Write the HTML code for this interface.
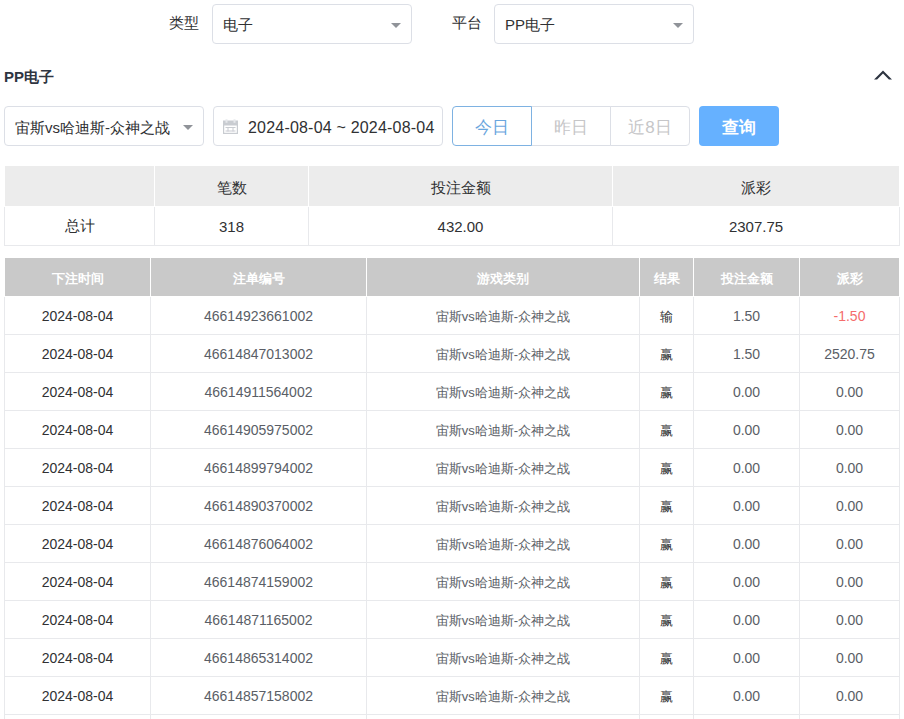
<!DOCTYPE html>
<html><head><meta charset="utf-8">
<style>
*{box-sizing:border-box;margin:0;padding:0}
html,body{width:904px;height:719px;overflow:hidden;background:#fff;font-family:"Liberation Sans",sans-serif;font-size:14px;color:#606266}
.abs{position:absolute}
.lbl{position:absolute;color:#303133;font-size:15px;line-height:20px;white-space:nowrap;margin-top:1px}
.sel{position:absolute;border:1px solid #dcdfe6;border-radius:4px;background:#fff;height:40px}
.sel .t{position:absolute;left:10px;top:10px;line-height:20px;color:#303133;font-size:15px;white-space:nowrap}
.sel .arr{position:absolute;right:10px;top:18px;width:0;height:0;border-left:5px solid transparent;border-right:5px solid transparent;border-top:5px solid #909399}
.title{position:absolute;left:4px;top:67px;font-weight:bold;color:#2f3541;font-size:15px;line-height:20px}
.rb{position:absolute;top:106px;height:40px;border:1px solid #dcdfe6;text-align:center;line-height:38px;padding-top:2px;color:#c6c6c8;font-size:17px;background:#fff}
.btn{position:absolute;left:699px;top:106px;width:80px;height:40px;border-radius:4px;background:#66b1ff;color:#fff;text-align:center;line-height:40px;padding-top:2px;font-size:17px;font-weight:bold}
table{border-collapse:collapse;position:absolute;table-layout:fixed}
td,th{text-align:center;font-weight:normal;padding:0}
#t1{left:4px;top:166px;width:895px}
#t1 th{padding-top:6px;background:#ececec;height:40px;color:#303133;font-size:15px;border:1px solid #fff;border-top:none}
#t1 td{padding-top:2px;height:39px;color:#303133;font-size:15px;border:1px solid #e8e9ec}
#t2{left:4px;top:258px;width:895px}
#t2 th{padding-top:4px;background:#c9c9c9;color:#fff;height:38px;font-weight:bold;font-size:13px;border:1px solid #fff;border-top:none}
#t2 td{padding-top:2px;height:38px;font-size:14px;color:#303133;border:1px solid #e8e9ec}
#t2 td.g{color:#5a5e66}
#t2 td.c{font-size:13px;padding-top:4px}
.red{color:#f56c6c !important}
</style></head><body>
<div class="lbl" style="left:169px;top:12px">类型</div>
<div class="sel" style="left:212px;top:4px;width:200px"><span class="t">电子</span><i class="arr"></i></div>
<div class="lbl" style="left:452px;top:12px">平台</div>
<div class="sel" style="left:494px;top:4px;width:200px"><span class="t">PP电子</span><i class="arr"></i></div>

<div class="title">PP电子</div>
<svg class="abs" style="left:870px;top:66px" width="26" height="18" viewBox="0 0 26 18"><path d="M4 13.6 L13 4.4 L22 13.6 L18.9 13.6 L13 7.6 L7.1 13.6 Z" fill="#2d3440"/></svg>

<div class="sel" style="left:4px;top:106px;width:200px"><span class="t" style="top:11px">宙斯vs哈迪斯-众神之战</span><i class="arr"></i></div>
<div class="sel" style="left:213px;top:106px;width:230px">
<svg class="abs" style="left:9px;top:12px" width="16" height="16" viewBox="0 0 16 16"><g fill="#c9ccd1"><rect x="0" y="1.5" width="15" height="5"/><rect x="0" y="6" width="1.2" height="9"/><rect x="13.8" y="6" width="1.2" height="9"/><rect x="0" y="13.8" width="15" height="1.2"/><rect x="2.5" y="8" width="10" height="1"/><rect x="2.5" y="11.5" width="10" height="1"/><rect x="4.5" y="8" width="1" height="4.5"/><rect x="9.5" y="8" width="1" height="4.5"/></g><g fill="#e6e8eb"><rect x="2.5" y="0.3" width="2" height="3.5"/><rect x="10.5" y="0.3" width="2" height="3.5"/></g></svg>
<span class="t" style="left:34px;top:11px;font-size:16px;letter-spacing:0.2px;color:#303133">2024-08-04 ~ 2024-08-04</span></div>
<div class="rb" style="left:452px;width:80px;border-color:#7eb2e2;color:#6aa6de;border-radius:4px 0 0 4px;z-index:2">今日</div>
<div class="rb" style="left:531px;width:80px;border-left:none">昨日</div>
<div class="rb" style="left:610px;width:80px;border-left:1px solid #dcdfe6;border-radius:0 4px 4px 0">近8日</div>
<div class="btn">查询</div>

<table id="t1">
<colgroup><col style="width:150px"><col style="width:154px"><col style="width:304px"><col style="width:287px"></colgroup>
<tr><th></th><th>笔数</th><th>投注金额</th><th>派彩</th></tr>
<tr><td>总计</td><td>318</td><td>432.00</td><td>2307.75</td></tr>
</table>

<table id="t2">
<colgroup><col style="width:146px"><col style="width:216px"><col style="width:273px"><col style="width:54px"><col style="width:106px"><col style="width:100px"></colgroup>
<tr><th>下注时间</th><th>注单编号</th><th>游戏类别</th><th>结果</th><th>投注金额</th><th>派彩</th></tr>
<tr><td>2024-08-04</td><td class="g">46614923661002</td><td class="g c">宙斯vs哈迪斯-众神之战</td><td class="c">输</td><td class="g">1.50</td><td class="red">-1.50</td></tr>
<tr><td>2024-08-04</td><td class="g">46614847013002</td><td class="g c">宙斯vs哈迪斯-众神之战</td><td class="c">赢</td><td class="g">1.50</td><td class="g">2520.75</td></tr>
<tr><td>2024-08-04</td><td class="g">46614911564002</td><td class="g c">宙斯vs哈迪斯-众神之战</td><td class="c">赢</td><td class="g">0.00</td><td class="g">0.00</td></tr>
<tr><td>2024-08-04</td><td class="g">46614905975002</td><td class="g c">宙斯vs哈迪斯-众神之战</td><td class="c">赢</td><td class="g">0.00</td><td class="g">0.00</td></tr>
<tr><td>2024-08-04</td><td class="g">46614899794002</td><td class="g c">宙斯vs哈迪斯-众神之战</td><td class="c">赢</td><td class="g">0.00</td><td class="g">0.00</td></tr>
<tr><td>2024-08-04</td><td class="g">46614890370002</td><td class="g c">宙斯vs哈迪斯-众神之战</td><td class="c">赢</td><td class="g">0.00</td><td class="g">0.00</td></tr>
<tr><td>2024-08-04</td><td class="g">46614876064002</td><td class="g c">宙斯vs哈迪斯-众神之战</td><td class="c">赢</td><td class="g">0.00</td><td class="g">0.00</td></tr>
<tr><td>2024-08-04</td><td class="g">46614874159002</td><td class="g c">宙斯vs哈迪斯-众神之战</td><td class="c">赢</td><td class="g">0.00</td><td class="g">0.00</td></tr>
<tr><td>2024-08-04</td><td class="g">46614871165002</td><td class="g c">宙斯vs哈迪斯-众神之战</td><td class="c">赢</td><td class="g">0.00</td><td class="g">0.00</td></tr>
<tr><td>2024-08-04</td><td class="g">46614865314002</td><td class="g c">宙斯vs哈迪斯-众神之战</td><td class="c">赢</td><td class="g">0.00</td><td class="g">0.00</td></tr>
<tr><td>2024-08-04</td><td class="g">46614857158002</td><td class="g c">宙斯vs哈迪斯-众神之战</td><td class="c">赢</td><td class="g">0.00</td><td class="g">0.00</td></tr>
<tr><td>2024-08-04</td><td class="g">46614857158002</td><td class="g c">宙斯vs哈迪斯-众神之战</td><td class="c">赢</td><td class="g">0.00</td><td class="g">0.00</td></tr>
</table>
</body></html>
